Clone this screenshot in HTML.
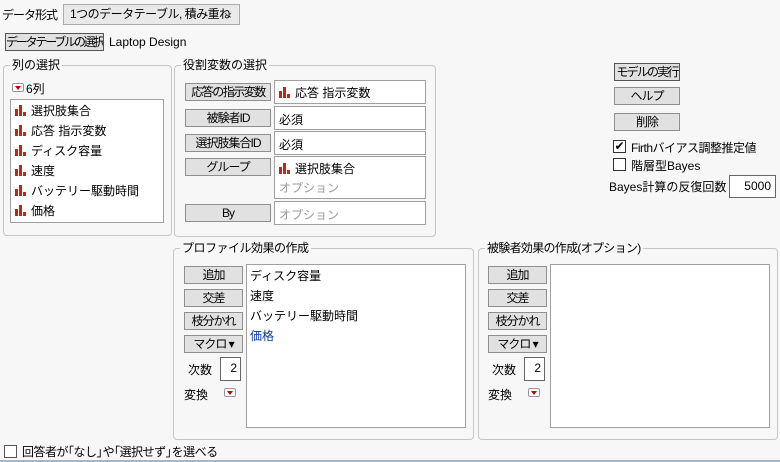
<!DOCTYPE html>
<html><head><meta charset="utf-8"><style>
*{box-sizing:border-box;margin:0;padding:0}
body{width:780px;height:462px;background:#f7f7f7;font-family:"Liberation Sans","Noto Sans CJK JP",sans-serif;font-size:12px;color:#000;position:relative;overflow:hidden}
.a{position:absolute;white-space:nowrap}
.btn{position:absolute;background:#e1e1e1;border:1px solid #8f8f8f;text-align:center;line-height:16px;height:18px;font-size:12px;white-space:nowrap;letter-spacing:-1px;overflow:hidden}
.box{position:absolute;background:#fff;border:1px solid #a0a0a0;white-space:nowrap}
.grp{position:absolute;border:1px solid #c6c6c6;border-radius:4px}
.lg{position:absolute;top:-9px;left:6px;background:#f7f7f7;padding:0 2px;line-height:16px;white-space:nowrap}
.ic{display:inline-block;width:11px;height:11px;vertical-align:-1px;margin-right:5px;position:relative}
.ic i{position:absolute;bottom:0;background:#c0280f;width:3px}
.tri{position:absolute;width:12px;height:9px;background:#fff;border:1px solid #999;border-radius:2px}
.tri:after{content:"";position:absolute;left:2px;top:2px;border-left:3px solid transparent;border-right:3px solid transparent;border-top:4px solid #c00000}
.cb{position:absolute;width:13px;height:13px;background:#fff;border:1px solid #333}
.gr{color:#999}
.ob{display:inline-block;margin-left:-6px}
.cbk{letter-spacing:-6px}
</style></head><body>
<div class="a" style="left:2px;top:6px;letter-spacing:-1px">データ形式</div>
<div class="a" style="left:63px;top:4px;width:177px;height:21px;border:1px solid #ababab;background:#e9e9e9;padding-left:6px;line-height:19px;letter-spacing:-0.5px">1つのデータテーブル, 積み重ね
<svg style="position:absolute;right:7px;top:7px" width="8" height="5"><path d="M1 1 L4 4 L7 1" fill="none" stroke="#555" stroke-width="1"/></svg></div>
<div class="btn" style="left:5px;top:33px;width:99px;border-color:#555;letter-spacing:-2.2px">データテーブルの選択</div>
<div class="a" style="left:109px;top:35px">Laptop Design</div>

<div class="grp" style="left:3px;top:65px;width:169px;height:171px"><div class="lg">列の選択</div></div>
<div class="tri" style="left:12px;top:83px"></div>
<div class="a" style="left:26px;top:80px">6列</div>
<div class="box" style="left:10px;top:99px;width:154px;height:124px"></div>
<div class="a" style="left:15px;top:101px;line-height:20px">
<div><span class="ic"><i style="left:0;height:7px"></i><i style="left:4px;height:11px"></i><i style="left:8px;height:4px"></i></span>選択肢集合</div>
<div><span class="ic"><i style="left:0;height:7px"></i><i style="left:4px;height:11px"></i><i style="left:8px;height:4px"></i></span>応答 指示変数</div>
<div><span class="ic"><i style="left:0;height:7px"></i><i style="left:4px;height:11px"></i><i style="left:8px;height:4px"></i></span>ディスク容量</div>
<div><span class="ic"><i style="left:0;height:7px"></i><i style="left:4px;height:11px"></i><i style="left:8px;height:4px"></i></span>速度</div>
<div><span class="ic"><i style="left:0;height:7px"></i><i style="left:4px;height:11px"></i><i style="left:8px;height:4px"></i></span>バッテリー駆動時間</div>
<div><span class="ic"><i style="left:0;height:7px"></i><i style="left:4px;height:11px"></i><i style="left:8px;height:4px"></i></span>価格</div>
</div>

<div class="grp" style="left:174px;top:65px;width:262px;height:172px"><div class="lg">役割変数の選択</div></div>
<div class="btn" style="left:185px;top:83px;width:86px;letter-spacing:-1.5px">応答の指示変数</div>
<div class="btn" style="left:185px;top:109px;width:86px">被験者ID</div>
<div class="btn" style="left:185px;top:134px;width:86px">選択肢集合ID</div>
<div class="btn" style="left:185px;top:158px;width:86px">グループ</div>
<div class="btn" style="left:185px;top:204px;width:86px">By</div>
<div class="box" style="left:274px;top:80px;width:152px;height:24px;padding:3px 4px"><span class="ic"><i style="left:0;height:7px"></i><i style="left:4px;height:11px"></i><i style="left:8px;height:4px"></i></span>応答 指示変数</div>
<div class="box" style="left:274px;top:106px;width:152px;height:24px;padding:4px 4px">必須</div>
<div class="box" style="left:274px;top:131px;width:152px;height:24px;padding:4px 4px">必須</div>
<div class="box" style="left:274px;top:156px;width:152px;height:43px;padding:3px 4px;line-height:19px"><span class="ic"><i style="left:0;height:7px"></i><i style="left:4px;height:11px"></i><i style="left:8px;height:4px"></i></span>選択肢集合<br><span class="gr">オプション</span></div>
<div class="box" style="left:274px;top:201px;width:152px;height:24px;padding:4px 4px"><span class="gr">オプション</span></div>

<div class="btn" style="left:614px;top:63px;width:66px;border-color:#555;letter-spacing:-1.8px">モデルの実行</div>
<div class="btn" style="left:614px;top:87px;width:66px">ヘルプ</div>
<div class="btn" style="left:614px;top:113px;width:66px">削除</div>
<div class="cb" style="left:613px;top:140px;font-size:12px;line-height:11px;text-align:center">&#10004;</div>
<div class="a" style="left:631px;top:139px;letter-spacing:-0.5px">Firthバイアス調整推定値</div>
<div class="cb" style="left:613px;top:158px"></div>
<div class="a" style="left:631px;top:157px">階層型Bayes</div>
<div class="a" style="left:609px;top:178px">Bayes計算の反復回数</div>
<div class="box" style="left:729px;top:175px;width:47px;height:23px;text-align:right;padding:3px 4px;border-color:#666">5000</div>

<div class="grp" style="left:173px;top:248px;width:301px;height:192px"><div class="lg" style="letter-spacing:-0.5px">プロファイル効果の作成</div></div>
<div class="btn" style="left:184px;top:266px;width:59px">追加</div>
<div class="btn" style="left:184px;top:289px;width:59px">交差</div>
<div class="btn" style="left:184px;top:312px;width:59px">枝分かれ</div>
<div class="btn" style="left:184px;top:335px;width:59px">マクロ ▾</div>
<div class="a" style="left:188px;top:361px">次数</div>
<div class="box" style="left:220px;top:357px;width:21px;height:24px;text-align:right;padding:3px 3px;border-color:#666">2</div>
<div class="a" style="left:184px;top:386px">変換</div>
<div class="tri" style="left:224px;top:388px"></div>
<div class="box" style="left:246px;top:264px;width:220px;height:164px;padding:1px 3px;line-height:20px">ディスク容量<br>速度<br>バッテリー駆動時間<br><span style="color:#0b3aa0">価格</span></div>

<div class="grp" style="left:478px;top:248px;width:300px;height:192px"><div class="lg" style="letter-spacing:-0.7px">被験者効果の作成(オプション)</div></div>
<div class="btn" style="left:488px;top:266px;width:59px">追加</div>
<div class="btn" style="left:488px;top:289px;width:59px">交差</div>
<div class="btn" style="left:488px;top:312px;width:59px">枝分かれ</div>
<div class="btn" style="left:488px;top:335px;width:59px">マクロ ▾</div>
<div class="a" style="left:492px;top:361px">次数</div>
<div class="box" style="left:524px;top:357px;width:21px;height:24px;text-align:right;padding:3px 3px;border-color:#666">2</div>
<div class="a" style="left:488px;top:386px">変換</div>
<div class="tri" style="left:528px;top:388px"></div>
<div class="box" style="left:550px;top:264px;width:220px;height:164px"></div>

<div class="cb" style="left:4px;top:445px;border-color:#555"></div>
<div class="a" style="left:22px;top:443px;letter-spacing:-0.5px">回答者が<span class="ob">「</span>なし<span class="cbk">」</span>や<span class="ob">「</span>選択せず<span class="cbk">」</span>を選べる</div>
<div class="a" style="left:0;top:460px;width:780px;height:2px;background:#a8b4cc"></div>
</body></html>
